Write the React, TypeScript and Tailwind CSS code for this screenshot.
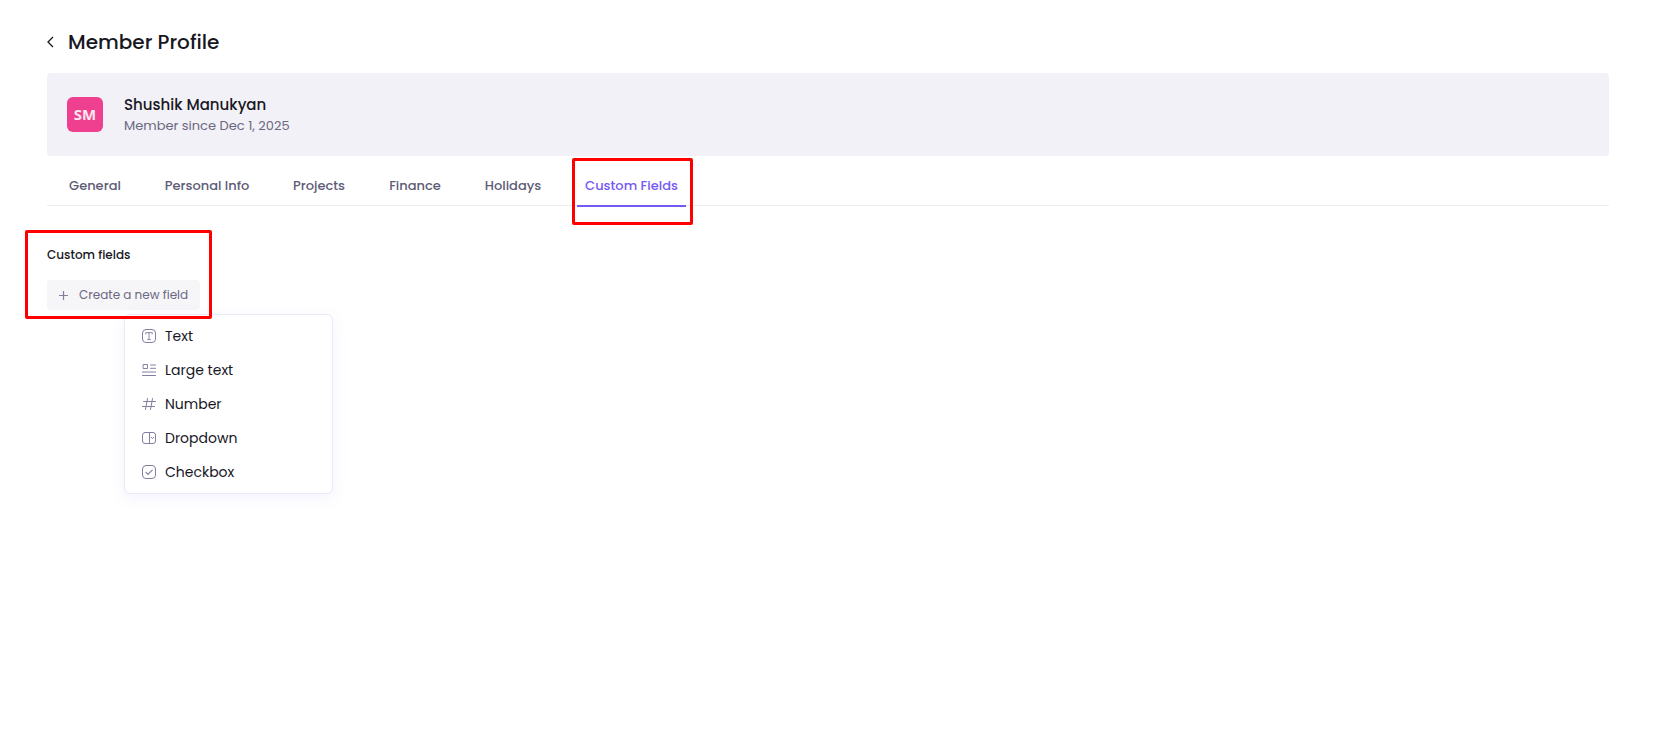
import type { ReactNode } from "react";

const tabs = [
  { label: "General", width: "min-w-[68px]" },
  { label: "Personal Info", width: "min-w-[100px]" },
  { label: "Projects", width: "min-w-[68px]" },
  { label: "Finance", width: "min-w-[68px]" },
  { label: "Holidays", width: "min-w-[72px]" },
  { label: "Custom Fields", width: "min-w-[109px]", active: true },
];

function Icon({ children }: { children: ReactNode }) {
  return (
    <svg
      viewBox="0 0 14 14"
      className="size-3.5 shrink-0 text-[#827f9f]"
      fill="none"
      stroke="currentColor"
      strokeWidth="1"
      strokeLinecap="round"
      strokeLinejoin="round"
      aria-hidden="true"
    >
      {children}
    </svg>
  );
}

const fieldTypes: { label: string; icon: ReactNode }[] = [
  {
    label: "Text",
    icon: (
      <>
        <rect x="0.5" y="0.5" width="13" height="13" rx="3.5" />
        <path d="M3.8 5V3.6h6.4V5M7 3.6v7M5.6 10.6h2.8" strokeWidth="0.9" />
      </>
    ),
  },
  {
    label: "Large text",
    icon: (
      <>
        <rect x="1.5" y="1.5" width="4" height="4" />
        <path d="M8.5 2h5M8.5 5.3h5M0.5 9h13M0.5 12.5h13" />
      </>
    ),
  },
  {
    label: "Number",
    icon: <path d="M5.5 1.5l-2 11M10.5 1.5l-2 11M1.5 4.5h12M0.5 9.5h12" />,
  },
  {
    label: "Dropdown",
    icon: (
      <>
        <rect x="0.5" y="1.5" width="13" height="11" rx="2.5" />
        <path d="M7.5 1.5v11" />
        <path d="M9.2 6.3l1.3 1.3 1.3-1.3" />
      </>
    ),
  },
  {
    label: "Checkbox",
    icon: (
      <>
        <rect x="0.5" y="0.5" width="13" height="13" rx="3.5" />
        <path d="M4 7.3l2 2 4.2-4.2" strokeWidth="1.2" />
      </>
    ),
  },
];

export default function App() {
  return (
    <main className="min-h-screen bg-white pr-[53px] pl-[47px] font-[Poppins,Inter,sans-serif] text-[#17171f]">
      <header className="flex items-center gap-3.5 pt-[27px] pb-4">
        <button type="button" aria-label="Back" className="flex h-[30px] w-[7px] items-center">
          <svg viewBox="0 0 7 12" className="h-3 w-[7px]" fill="none" stroke="currentColor" strokeWidth="1.3" aria-hidden="true">
            <path d="M6 1L1 6l5 5" />
          </svg>
        </button>
        <h1 className="text-[20px] leading-[30px] font-medium">Member Profile</h1>
      </header>

      <section className="flex h-[83px] items-center gap-[21px] rounded bg-[#f2f1f7] px-5">
        <div className="flex h-[35px] w-9 items-center justify-center rounded-md bg-[#ef3f8f] font-['Open_Sans',sans-serif] text-[15px] font-bold text-[#fde6f0]">
          SM
        </div>
        <div className="pt-0.5">
          <p className="text-[15px] leading-5 font-medium">Shushik Manukyan</p>
          <p className="text-[13px] leading-[22px] text-[#6b6880]">Member since Dec 1, 2025</p>
        </div>
      </section>

      <nav className="flex gap-7 border-b border-[#ecebf2] pt-5 pl-3.5">
        {tabs.map((tab) => (
          <div key={tab.label} className="relative -mb-0.5">
            <a
              href="#"
              aria-current={tab.active ? "page" : undefined}
              className={`block border-b-2 pb-[9px] text-center text-[13px] leading-5 font-medium whitespace-nowrap ${tab.width} ${
                tab.active ? "border-[#7559f3] text-[#7559f3]" : "border-transparent text-[#5d5b76]"
              }`}
            >
              {tab.label}
            </a>
            {tab.active && (
              <span className="pointer-events-none absolute -top-[18px] -right-[7px] -bottom-[18px] -left-[5px] rounded-xs border-3 border-[#ff0000]" />
            )}
          </div>
        ))}
      </nav>

      <div className="flex pt-[39px]">
        <section className="relative">
          <h2 className="text-[12px] leading-5 font-medium">Custom fields</h2>
          <button
            type="button"
            aria-haspopup="menu"
            aria-expanded="true"
            className="mt-[15px] flex h-[30px] w-[153px] items-center gap-[11px] rounded bg-[#f6f6f9] pl-3 text-[12px] whitespace-nowrap text-[#6b6880]"
          >
            <svg viewBox="0 0 9 9" className="size-[9px] shrink-0" fill="none" stroke="#827f9f" strokeWidth="1.2" aria-hidden="true">
              <path d="M4.5 0v9M0 4.5h9" />
            </svg>
            Create a new field
          </button>

          <div
            role="menu"
            className="absolute top-full left-[77px] mt-1 w-[209px] rounded-md border border-[#ebe9f7] bg-white py-1 shadow-[0_4px_16px_rgba(110,90,230,0.08)]"
          >
            {fieldTypes.map((type) => (
              <button
                key={type.label}
                type="button"
                role="menuitem"
                className="flex h-[34px] w-full items-center gap-[9px] px-[17px] text-left text-[14px] leading-5"
              >
                <Icon>{type.icon}</Icon>
                {type.label}
              </button>
            ))}
          </div>

          <span className="pointer-events-none absolute -top-[15px] -right-3 -bottom-[9px] -left-[22px] rounded-xs border-3 border-[#ff0000]" />
        </section>
      </div>
    </main>
  );
}
